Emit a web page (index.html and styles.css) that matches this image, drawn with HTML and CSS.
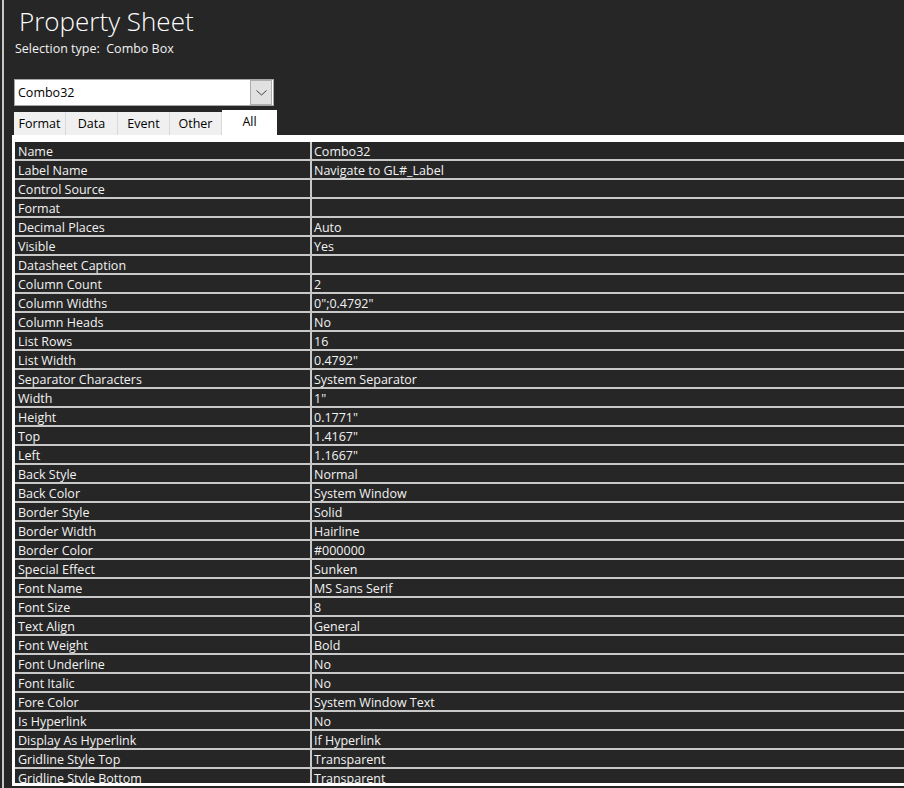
FILE: index.html
```html
<!DOCTYPE html>
<html lang="en">
<head>
  <meta charset="utf-8" />
  <title>Property Sheet</title>
  <link rel="stylesheet" href="styles.css">
</head>
<body>
  <div class="sheet">
    <h1 class="title">Property Sheet</h1>
    <div class="seltype">Selection type:&nbsp; Combo Box</div>

    <div class="combo">
      <span class="combo-text">Combo32</span>
      <span class="combo-btn">
        <svg width="11" height="6" viewBox="0 0 11 6"><path d="M0.5 0.5 L5.5 5 L10.5 0.5" fill="none" stroke="#404040" stroke-width="1"/></svg>
      </span>
    </div>

    <div class="tabs">
      <span class="tab">Format</span>
      <span class="tab">Data</span>
      <span class="tab">Event</span>
      <span class="tab">Other</span>
      <span class="tab active">All</span>
    </div>

    <div class="panel">
      <div class="props">
        <div class="k">Name</div><div class="v">Combo32</div>
        <div class="k">Label Name</div><div class="v">Navigate to GL#_Label</div>
        <div class="k">Control Source</div><div class="v"></div>
        <div class="k">Format</div><div class="v"></div>
        <div class="k">Decimal Places</div><div class="v">Auto</div>
        <div class="k">Visible</div><div class="v">Yes</div>
        <div class="k">Datasheet Caption</div><div class="v"></div>
        <div class="k">Column Count</div><div class="v">2</div>
        <div class="k">Column Widths</div><div class="v">0";0.4792"</div>
        <div class="k">Column Heads</div><div class="v">No</div>
        <div class="k">List Rows</div><div class="v">16</div>
        <div class="k">List Width</div><div class="v">0.4792"</div>
        <div class="k">Separator Characters</div><div class="v">System Separator</div>
        <div class="k">Width</div><div class="v">1"</div>
        <div class="k">Height</div><div class="v">0.1771"</div>
        <div class="k">Top</div><div class="v">1.4167"</div>
        <div class="k">Left</div><div class="v">1.1667"</div>
        <div class="k">Back Style</div><div class="v">Normal</div>
        <div class="k">Back Color</div><div class="v">System Window</div>
        <div class="k">Border Style</div><div class="v">Solid</div>
        <div class="k">Border Width</div><div class="v">Hairline</div>
        <div class="k">Border Color</div><div class="v">#000000</div>
        <div class="k">Special Effect</div><div class="v">Sunken</div>
        <div class="k">Font Name</div><div class="v">MS Sans Serif</div>
        <div class="k">Font Size</div><div class="v">8</div>
        <div class="k">Text Align</div><div class="v">General</div>
        <div class="k">Font Weight</div><div class="v">Bold</div>
        <div class="k">Font Underline</div><div class="v">No</div>
        <div class="k">Font Italic</div><div class="v">No</div>
        <div class="k">Fore Color</div><div class="v">System Window Text</div>
        <div class="k">Is Hyperlink</div><div class="v">No</div>
        <div class="k">Display As Hyperlink</div><div class="v">If Hyperlink</div>
        <div class="k">Gridline Style Top</div><div class="v">Transparent</div>
        <div class="k">Gridline Style Bottom</div><div class="v">Transparent</div>
      </div>
    </div>
  </div>
</body>
</html>
```

FILE: styles.css
```css
:root{
  --bg: #262626;
  --line: #c8c8c8;
  --text: #f2f2f2;
}
html, body{ height: 100%; }
body{
  margin: 0;
  background: var(--bg);
  overflow: hidden;
  font-family: "Open Sans", "Noto Sans", sans-serif;
  font-size: 12.5px;
  color: var(--text);
}
.sheet{
  margin-left: 2px;
  border-left: 2px solid var(--line);
  height: 788px;
  padding-left: 10px;
  width: 1000px;
}

.title{
  margin: 0;
  padding: 5px 0 0 5px;
  font-size: 26px;
  font-weight: 300;
  line-height: 32px;
  color: #fff;
}
.seltype{
  padding: 4px 0 0 1px;
  line-height: 16px;
  height: 38px;
}

.combo{
  width: 260px; height: 27px; box-sizing: border-box;
  background: #fff; border: 1px solid #a5a5a5;
  display: flex; align-items: center; justify-content: space-between;
  color: #000;
  padding: 0 1px 0 3px;
}
.combo-btn{
  width: 20px; height: 23px;
  background: #e1e1e1; border: 1px solid #adadad;
  display: flex; align-items: center; justify-content: center;
}

.tabs{ display: flex; align-items: flex-end; margin-top: 4px; height: 25px; }
.tab{
  width: 51px; height: 23px; line-height: 24px; text-align: center;
  background: #f0f0f0; color: #000;
  border-right: 1px solid #d9d9d9;
}
.tab.active{
  width: 55px; height: 25px; line-height: 24px;
  background: #fff; border-right: 0;
}

.panel{
  background: #fff;
  margin-left: -2px;
  padding: 7px 0 3px 3px;
  height: 641px;
}
.props{
  display: grid;
  grid-template-columns: 295px 1fr;
  gap: 2px;
  background: var(--line);
  height: 641px;
  overflow: hidden;
  align-content: start;
}
.props .k, .props .v{
  background: var(--bg);
  height: 16px; line-height: 17px;
  padding: 1px 0 0 3px;
  white-space: nowrap;
}
.props .v{ padding-left: 2px; }
```
